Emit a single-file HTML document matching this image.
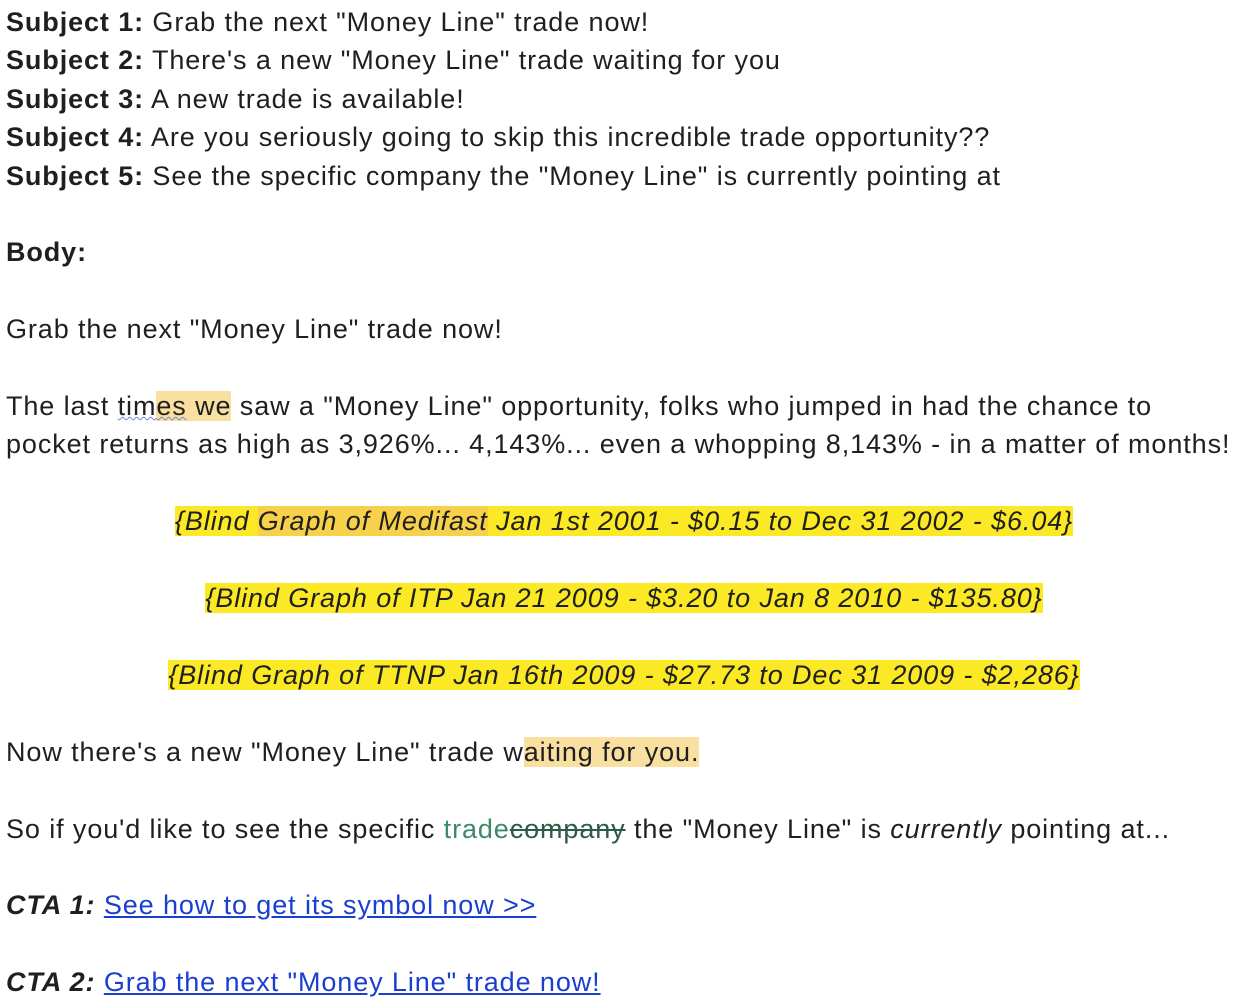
<!DOCTYPE html>
<html><head><meta charset="utf-8"><style>
html,body{margin:0;padding:0;background:#fff;width:1254px;height:1001px;overflow:hidden}
body{font-family:"Liberation Sans",Arial,sans-serif;font-size:27px;letter-spacing:0.9px;color:#1f1f1f;line-height:38.4px;padding:3px 0 0 6px;}
p{margin:0;white-space:nowrap}
.c{text-align:center;padding-right:18px}
.y{background:#fbe925;font-style:italic}
.o{background:#f9dfa0}
.oy{background:#f8d14a}
.g{color:#3e8a68}
.s{color:#2c5c45;text-decoration:line-through}
a{color:#1a3fd0;text-decoration:underline}
.u{text-decoration:underline wavy #6d86d8;text-decoration-thickness:1px}
</style></head><body>
<p><b>Subject 1:</b> Grab the next "Money Line" trade now!</p>
<p><b>Subject 2:</b> There's a new "Money Line" trade waiting for you</p>
<p><b>Subject 3:</b> A new trade is available!</p>
<p><b>Subject 4:</b> Are you seriously going to skip this incredible trade opportunity??</p>
<p><b>Subject 5:</b> See the specific company the "Money Line" is currently pointing at</p>
<p>&nbsp;</p>
<p><b>Body:</b></p>
<p>&nbsp;</p>
<p>Grab the next "Money Line" trade now!</p>
<p>&nbsp;</p>
<p>The last <span class="u">tim</span><span class="o"><span class="u">es</span> we</span> saw a "Money Line" opportunity, folks who jumped in had the chance to</p>
<p>pocket returns as high as 3,926%... 4,143%... even a whopping 8,143% - in a matter of months!</p>
<p>&nbsp;</p>
<p class="c"><span class="y">{Blind <span class="oy">Graph of Medifast</span> Jan 1st 2001 - $0.15 to Dec 31 2002 - $6.04}</span></p>
<p>&nbsp;</p>
<p class="c"><span class="y">{Blind Graph of ITP Jan 21 2009 - $3.20 to Jan 8 2010 - $135.80}</span></p>
<p>&nbsp;</p>
<p class="c"><span class="y">{Blind Graph of TTNP Jan 16th 2009 - $27.73 to Dec 31 2009 - $2,286}</span></p>
<p>&nbsp;</p>
<p>Now there's a new "Money Line" trade w<span class="o">aiting for you.</span></p>
<p>&nbsp;</p>
<p>So if you'd like to see the specific <span class="g">trade</span><span class="s">company</span> the "Money Line" is <i>currently</i> pointing at...</p>
<p>&nbsp;</p>
<p><b><i>CTA 1:</i></b> <a>See how to get its symbol now &gt;&gt;</a></p>
<p>&nbsp;</p>
<p><b><i>CTA 2:</i></b> <a>Grab the next "Money Line" trade now!</a></p>
</body></html>
